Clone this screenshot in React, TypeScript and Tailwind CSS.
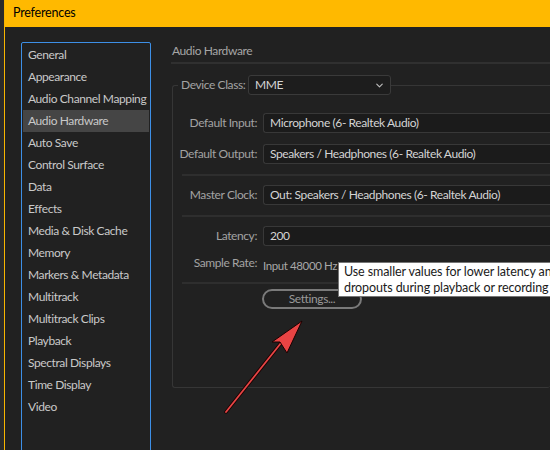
import { ChevronDown } from 'lucide-react';

const ITEMS = [
  'General',
  'Appearance',
  'Audio Channel Mapping',
  'Audio Hardware',
  'Auto Save',
  'Control Surface',
  'Data',
  'Effects',
  'Media & Disk Cache',
  'Memory',
  'Markers & Metadata',
  'Multitrack',
  'Multitrack Clips',
  'Playback',
  'Spectral Displays',
  'Time Display',
  'Video',
];

const font = { fontFamily: 'Lato, "Noto Sans", sans-serif' };

function Field({ label, value }: { label: string; value: string }) {
  return (
    <div className="flex items-center h-[20px]">
      <span className="w-[86px] shrink-0 text-right pr-[6px] text-[#a3a3a3]">{label}</span>
      <div className="flex-1 h-[20px] bg-[#1b1b1b] border border-[#383838] rounded-l-[3px] border-r-0 pl-[6px] flex items-center text-[#d4d4d4]">
        {value}
      </div>
    </div>
  );
}

export default function App() {
  return (
    <div className="relative w-[550px] h-[450px] bg-[#2a2a2a] overflow-hidden flex text-[12px] tracking-[-0.4px] whitespace-nowrap" style={font}>
      <div className="w-[4px] shrink-0" />
      <div className="flex-1 flex flex-col border-l border-[#f7b500]">
        <div className="h-[27px] shrink-0 bg-[#ffb900] flex items-center pl-[8px] text-[12.5px] tracking-[-0.2px] text-black">Preferences</div>
        <div className="flex-1 bg-[#212121] flex pl-[16px] pt-[15px]">
          {/* category list */}
          <div className="w-[130px] shrink-0 border border-[#3d8fe6] rounded-[2px] pt-[1px] px-[1px] h-[420px]">
            {ITEMS.map((item) => (
              <div
                key={item}
                className={`h-[22px] flex items-center pl-[5px] text-[#c9c9c9] ${item === 'Audio Hardware' ? 'bg-[#454545]' : ''}`}
              >
                {item}
              </div>
            ))}
          </div>

          {/* right panel */}
          <div className="flex-1 pl-[20px] relative">
            <div className="text-[#a6a6a6] pl-[1px] h-[20px]">Audio Hardware</div>
            <div className="h-[2px] bg-[#303030]" />

            <div className="mt-[21px] ml-[1px] h-[303px] border border-[#363636] rounded-[3px] border-r-0 relative">
              <div className="absolute -top-[11px] left-[5px] flex items-center bg-[#212121] pl-[3px]">
                <span className="w-[67px] text-[#a3a3a3]">Device Class:</span>
                <div className="w-[143px] h-[20px] bg-[#1d1d1d] border border-[#3a3a3a] rounded-[3px] pl-[6px] pr-[5px] flex items-center justify-between text-[#d4d4d4]">
                  MME
                  <ChevronDown size={11} strokeWidth={2.5} className="text-[#bdbdbd]" />
                </div>
                <div className="w-[200px] h-px bg-[#363636]" />
              </div>

              <div className="pl-[4px] pt-[27px] flex flex-col">
                <Field label="Default Input:" value="Microphone (6- Realtek Audio)" />
                <div className="h-[11px]" />
                <Field label="Default Output:" value="Speakers / Headphones (6- Realtek Audio)" />
                <div className="h-[10px]" />
                <div className="h-[2px] bg-[#2e2e2e] ml-[5px]" />
                <div className="h-[9px]" />
                <Field label="Master Clock:" value="Out: Speakers / Headphones (6- Realtek Audio)" />
                <div className="h-[10px]" />
                <div className="h-[2px] bg-[#2e2e2e] ml-[5px]" />
                <div className="h-[9px]" />
                <Field label="Latency:" value="200" />
                <div className="flex items-center h-[20px] mt-[7px]">
                  <span className="w-[86px] shrink-0 text-right pr-[6px] text-[#a3a3a3]">Sample Rate:</span>
                  <span className="text-[#a8a8a8] pt-[5px] text-[11.5px]">Input 48000 Hz</span>
                </div>
                <div className="h-[9px]" />
                <div className="h-[2px] bg-[#2e2e2e] ml-[5px]" />
                <div className="h-[5px]" />
                <div className="pl-[85px]">
                  <div className="w-[100px] h-[20px] rounded-full border-2 border-[#7a7a7a] flex items-center justify-center text-[#9a9a9a]">
                    Settings...
                  </div>
                </div>
              </div>
            </div>

            {/* tooltip */}
            <div className="absolute left-[187px] top-[220px] w-[230px] h-[35px] bg-white border border-[#767676] text-[#1a1a1a] text-[12.5px] tracking-[-0.1px] leading-[16px] pl-[5px] pt-[1px]">
              Use smaller values for lower latency and
              <br />
              dropouts during playback or recording
            </div>
          </div>
        </div>
      </div>

      {/* annotation arrow */}
      <svg className="absolute left-0 top-0 pointer-events-none" width="550" height="450">
        <line x1="226" y1="412" x2="289" y2="333" stroke="#1a0000" strokeWidth="3.5" strokeLinecap="round" />
        <line x1="226" y1="412" x2="289" y2="333" stroke="#e64545" strokeWidth="1.8" strokeLinecap="round" />
        <path d="M302 321 L272 342 L280 342 L287 353 Z" fill="#e84444" stroke="#1a0000" strokeWidth="1" strokeLinejoin="round" />
      </svg>
    </div>
  );
}
